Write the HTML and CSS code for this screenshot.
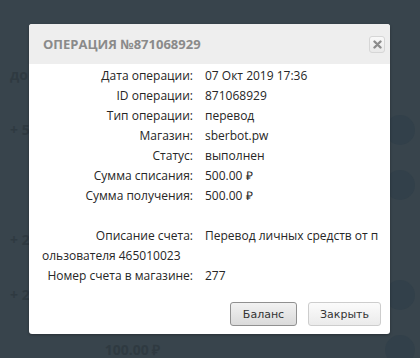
FILE: index.html
```html
<!DOCTYPE html>
<html lang="ru">
<head>
    <meta charset="UTF-8">
    <title>Операция</title>
    <link rel="stylesheet" href="styles.css">
</head>
<body>
    <div class="page">
        <div class="bg-row"><span class="bg-text">до</span></div>
        <div class="bg-row"><span class="bg-text">+ 5</span><span class="bg-dot"></span></div>
        <div class="bg-row"><span class="bg-text"></span><span class="bg-dot"></span></div>
        <div class="bg-row"><span class="bg-text">+ 20</span><span class="bg-mid">₽</span><span class="bg-dot hidden"></span></div>
        <div class="bg-row"><span class="bg-text">+ 20</span><span class="bg-dot"></span></div>
        <div class="bg-row"><span class="bg-text"></span><span class="bg-mid">100.00 ₽</span><span class="bg-dot"></span></div>
    </div>

    <div class="modal">
        <div class="modal-head">
            <span class="modal-title">Операция №871068929</span>
            <button class="close-btn" title="Закрыть">
                <svg width="9" height="9" viewBox="0 0 9 9"><path d="M1.5 1.5L7.5 7.5M7.5 1.5L1.5 7.5" stroke="#8c8c8c" stroke-width="2.4" stroke-linecap="round"/></svg>
            </button>
        </div>
        <div class="modal-body">
            <div class="row"><span class="label">Дата операции:</span>07 Окт 2019 17:36</div>
            <div class="row"><span class="label">ID операции:</span>871068929</div>
            <div class="row"><span class="label">Тип операции:</span>перевод</div>
            <div class="row"><span class="label">Магазин:</span>sberbot.pw</div>
            <div class="row"><span class="label">Статус:</span>выполнен</div>
            <div class="row"><span class="label">Сумма списания:</span>500.00 ₽</div>
            <div class="row"><span class="label">Сумма получения:</span>500.00 ₽</div>
            <div class="row spacer"></div>
            <div class="row wrap"><span class="label">Описание счета:</span>Перевод личных средств от п<wbr>ользователя 465010023</div>
            <div class="row"><span class="label">Номер счета в магазине:</span>277</div>
        </div>
        <div class="modal-foot">
            <button class="btn btn-active">Баланс</button>
            <button class="btn btn-close">Закрыть</button>
        </div>
    </div>
</body>
</html>
```

FILE: styles.css
```css
html, body {
    overflow: hidden;
}
body {
    margin: 0;
    background: #38444c;
    font-family: "Open Sans", sans-serif;
}
.page {
    height: 358px;
    overflow: hidden;
    padding-top: 47px;
    box-sizing: border-box;
}
.bg-row {
    height: 55px;
    display: flex;
    align-items: center;
    justify-content: space-between;
    padding: 0 5px 0 10px;
    color: #2f3a41;
    font-size: 14px;
    font-weight: bold;
}
.bg-dot {
    width: 30px;
    height: 30px;
    border-radius: 50%;
    background: #32404a;
}
.hidden {
    visibility: hidden;
}
.bg-mid {
    margin-right: 130px;
}
.modal {
    position: absolute;
    left: 29px;
    top: 24px;
    width: 361px;
    background: #fff;
    border-radius: 3px;
    box-shadow: 0 1px 3px rgba(0, 0, 0, 0.3);
    overflow: hidden;
}
.modal-head {
    height: 40px;
    background: #eeeeee;
    display: flex;
    align-items: center;
    justify-content: space-between;
    padding: 0 5px 0 14px;
}
.modal-title {
    text-transform: uppercase;
    font-weight: bold;
    font-size: 13px;
    color: #8a8a8a;
}
.close-btn {
    width: 16px;
    height: 17px;
    padding: 0;
    border: 1px solid #d6d6d6;
    border-radius: 3px;
    background: linear-gradient(#f9f9f9, #e9e9e9);
    display: flex;
    align-items: center;
    justify-content: center;
}
.modal-body {
    padding: 2px 10px 0 13px;
    font-size: 12px;
    color: #262626;
}
.row {
    line-height: 20px;
}
.spacer {
    height: 20px;
}
.wrap {
    word-break: break-all;
}
.label {
    display: inline-block;
    width: 151px;
    margin-right: 12px;
    text-align: right;
}
.modal-foot {
    display: flex;
    justify-content: flex-end;
    gap: 11px;
    padding: 16px 9px 8px;
}
.btn {
    height: 24px;
    width: 73px;
    padding: 0;
    font-family: "DejaVu Sans", sans-serif;
    font-size: 11px;
    color: #333;
    border: 1px solid #cdcdcd;
    border-radius: 3px;
    background: linear-gradient(#fbfbfb, #ebebeb);
}
.btn-active {
    width: 67px;
    border-color: #909090;
    background: linear-gradient(#f2f2f2, #dadada);
}
```
